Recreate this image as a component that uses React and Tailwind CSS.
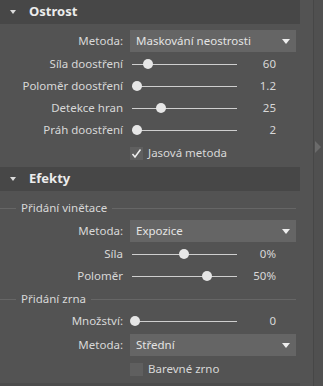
const font = { fontFamily: '"Noto Sans", "Open Sans", sans-serif' };

function Header({ title }) {
  return (
    <div className="flex h-[24px] w-[300px] items-center bg-[#474747]">
      <span className="ml-[10px] h-0 w-0 border-x-[3.5px] border-t-[4px] border-x-transparent border-t-[#dcdcdc]" />
      <span className="ml-[13px] text-[13px] font-bold text-[#ececec]">{title}</span>
    </div>
  );
}

function Label({ children }) {
  return <div className="w-[124px] shrink-0 pr-[1px] text-right">{children}</div>;
}

function Select({ value }) {
  return (
    <div className="flex h-[24px] items-center">
      <Label>Metoda:</Label>
      <div className="ml-[6px] flex h-[22px] w-[166px] items-center justify-between bg-[#656565] pl-[6px] pr-[6px] text-[#e4e4e4]">
        <span>{value}</span>
        <span className="h-0 w-0 border-x-[4px] border-t-[5px] border-x-transparent border-t-[#eeeeee]" />
      </div>
    </div>
  );
}

function Slider({ label, pos, value }) {
  return (
    <div className="flex h-[22px] items-center">
      <Label>{label}</Label>
      <div className="relative ml-[8px] h-[10px] w-[105px]">
        <div className="absolute left-0 right-0 top-[4.5px] h-px bg-[#cfcfcf]" />
        <div
          className="absolute top-0 h-[10px] w-[10px] rounded-full bg-[#e6e6e6]"
          style={{ left: pos - 5 }}
        />
      </div>
      <div className="w-[39px] text-right">{value}</div>
    </div>
  );
}

function Check({ checked, label }) {
  return (
    <div className="flex h-[22px] items-center">
      <div className="ml-[130px] flex h-[13px] w-[13px] items-center justify-center bg-[#5f5f5f]">
        {checked ? (
          <svg width="11" height="11" viewBox="0 0 11 11">
            <path d="M1.5 6 L4 9 L9.5 1.5" fill="none" stroke="#f0f0f0" strokeWidth="1.5" />
          </svg>
        ) : null}
      </div>
      <span className="ml-[5px]">{label}</span>
    </div>
  );
}

function Group({ title }) {
  return (
    <div className="flex h-[22px] w-[296px] items-center">
      <div className="h-px w-[16px] bg-[#666666]" />
      <span className="px-[5px]">{title}</span>
      <div className="h-px flex-1 bg-[#666666]" />
    </div>
  );
}

export default function App() {
  return (
    <div className="flex h-[386px] w-[323px] overflow-hidden bg-[#535353] text-[11.5px] text-[#d8d8d8]" style={font}>
      <div className="w-[313px] shrink-0">
        <Header title="Ostrost" />
        <div className="pt-[5px]">
          <Select value="Maskování neostrosti" />
          <Slider label="Síla doostření" pos={16} value="60" />
          <Slider label="Poloměr doostření" pos={5} value="1.2" />
          <Slider label="Detekce hran" pos={29} value="25" />
          <Slider label="Práh doostření" pos={5} value="2" />
          <div className="h-[1px]" />
          <Check checked label="Jasová metoda" />
        </div>
        <div className="mt-[3px]">
          <Header title="Efekty" />
        </div>
        <div className="pt-[6px]">
          <Group title="Přidání vinětace" />
          <Select value="Expozice" />
          <Slider label="Síla" pos={52} value="0%" />
          <Slider label="Poloměr" pos={75} value="50%" />
          <div className="h-[1px]" />
          <Group title="Přidání zrna" />
          <Slider label="Množství:" pos={3} value="0" />
          <div className="h-[1px]" />
          <Select value="Střední" />
          <div className="h-[1px]" />
          <Check label="Barevné zrno" />
        </div>
        <div className="mt-[3px] h-[10px] w-[300px] bg-[#4c4c4c]" />
      </div>
      <div className="relative flex-1 border-l border-[#474747] bg-[#505050]">
        <span className="absolute left-[1px] top-[141px] h-0 w-0 border-y-[6px] border-l-[6px] border-y-transparent border-l-[#6b6b6b]" />
      </div>
    </div>
  );
}
